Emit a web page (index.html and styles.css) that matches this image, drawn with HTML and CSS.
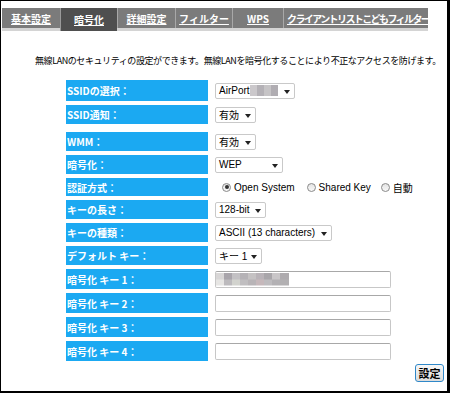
FILE: index.html
```html
<!DOCTYPE html>
<html lang="ja">
<head>
<meta charset="utf-8">
<title>暗号化</title>
<link rel="stylesheet" href="styles.css">
</head>
<body>
<div class="frame">
  <nav class="tabs">
    <a class="tab t1">基本設定</a>
    <a class="tab t2 active">暗号化</a>
    <a class="tab t3">詳細設定</a>
    <a class="tab t4">フィルター</a>
    <a class="tab t5">WPS</a>
    <a class="tab t6">クライアントリストこどもフィルター</a>
  </nav>
  <p class="desc">無線LANのセキュリティの設定ができます。無線LANを暗号化することにより不正なアクセスを防げます。</p>
  <div class="form">
    <div class="row r1"><div class="label">SSIDの選択：</div><div class="ctrl"><div class="select w-ssid"><span class="val">AirPort</span><span class="blur"></span><i class="arrow"></i></div></div></div>
    <div class="row"><div class="label">SSID通知：</div><div class="ctrl"><div class="select w-on"><span class="val">有効</span><i class="arrow"></i></div></div></div>
    <div class="row more"><div class="label">WMM：</div><div class="ctrl"><div class="select w-on"><span class="val">有効</span><i class="arrow"></i></div></div></div>
    <div class="row"><div class="label">暗号化：</div><div class="ctrl"><div class="select w-wep"><span class="val">WEP</span><i class="arrow"></i></div></div></div>
    <div class="row short"><div class="label">認証方式：</div><div class="ctrl radios">
      <label class="radio"><i class="dot checked"></i>Open System</label>
      <label class="radio"><i class="dot"></i>Shared Key</label>
      <label class="radio"><i class="dot"></i>自動</label>
    </div></div>
    <div class="row"><div class="label">キーの長さ：</div><div class="ctrl"><div class="select w-bit"><span class="val">128-bit</span><i class="arrow"></i></div></div></div>
    <div class="row"><div class="label">キーの種類：</div><div class="ctrl"><div class="select w-ascii"><span class="val">ASCII (13 characters)</span><i class="arrow"></i></div></div></div>
    <div class="row"><div class="label">デフォルト キー：</div><div class="ctrl"><div class="select w-key"><span class="val">キー 1</span><i class="arrow"></i></div></div></div>
    <div class="row key"><div class="label">暗号化 キー 1：</div><div class="ctrl"><div class="input"><span class="blur2"></span></div></div></div>
    <div class="row key"><div class="label">暗号化 キー 2：</div><div class="ctrl"><div class="input"></div></div></div>
    <div class="row key"><div class="label">暗号化 キー 3：</div><div class="ctrl"><div class="input"></div></div></div>
    <div class="row key"><div class="label">暗号化 キー 4：</div><div class="ctrl"><div class="input"></div></div></div>
  </div>
  <div class="actions"><button class="btn">設定</button></div>
</div>
</body>
</html>
```
FILE: styles.css
```css
* { box-sizing: border-box; }
html, body { margin: 0; padding: 0; background: #fff; }
.frame {
  width: 450px;
  height: 393px;
  border-style: solid;
  border-color: #000;
  border-width: 1px 3px 2px 1px;
  font-family: "Noto Sans CJK JP", "Liberation Sans", sans-serif;
}
.tabs {
  display: flex;
  margin: 7px 0 0 1px;
  width: 426px;
  height: 23px;
  background: #7b7b7b;
  border-bottom: 3px solid #d4d4d4;
}
.tab {
  display: flex;
  align-items: center;
  justify-content: center;
  height: 20px;
  color: #fff;
  font-size: 10px;
  font-weight: bold;
  text-decoration: underline;
  border-left: 1px solid #a8a8a8;
  white-space: nowrap;
}
.t1 { width: 58px; border-left: none; }
.t2 { width: 57px; }
.t3 { width: 58px; }
.t4 { width: 57px; }
.t5 { width: 51px; }
.t6 { width: 145px; letter-spacing: -1.6px; justify-content: flex-start; padding-left: 3px; }
.tab.active { background: #4f4f4f; height: 23px; margin-bottom: -3px; border-left-color: #9a9a9a; }
.desc {
  margin: 24px 0 0 34px;
  font-size: 9px;
  line-height: 12px;
  color: #000;
  white-space: nowrap;
  letter-spacing: -0.42px;
}
.form {
  display: flex;
  flex-direction: column;
  gap: 4px;
  margin: 13px 0 0 65px;
}
.row {
  display: grid;
  grid-template-columns: 142px auto;
  column-gap: 7px;
  height: 19px;
}
.row.r1 { height: 21px; }
.row.more { margin-top: 4px; }
.row.short { height: 18px; }
.row.key { height: 20px; }
.label {
  background: #1ba9f2;
  color: #fff;
  font-size: 10px;
  font-weight: bold;
  display: flex;
  align-items: center;
  padding-left: 1px;
  white-space: pre;
}
.ctrl {
  display: flex;
  align-items: center;
}
.select {
  position: relative;
  display: flex;
  align-items: center;
  height: 16px;
  border: 1px solid #c9c9c9;
  border-radius: 2px;
  background: #fff;
  padding-left: 3px;
  font-family: "Liberation Sans", "Noto Sans CJK JP", sans-serif;
  font-size: 10px;
  color: #000;
}
.w-ssid { width: 80px; }
.w-on { width: 41px; }
.w-wep { width: 68px; }
.w-bit { width: 51px; }
.w-ascii { width: 117px; }
.w-key { width: 47px; }
.arrow {
  position: absolute;
  right: 4px;
  top: 6px;
  width: 0;
  height: 0;
  border-left: 3.5px solid transparent;
  border-right: 3.5px solid transparent;
  border-top: 4px solid #222;
}
.blur {
  display: inline-block;
  width: 28px;
  height: 11px;
  background: linear-gradient(90deg, #cbc8cb 0 25%, #b4b1b6 25% 50%, #c6c4c6 50% 75%, #b0adb2 75%);
}
.radios { font-family: "Liberation Sans", "Noto Sans CJK JP", sans-serif; font-size: 10px; }
.radio {
  display: flex;
  align-items: center;
  margin-right: 10px;
}
.radios .radio:first-child { margin-left: 7px; margin-right: 12px; }
.dot {
  width: 9px;
  height: 9px;
  border-radius: 50%;
  border: 1px solid #8a8a8a;
  background: linear-gradient(#e4e4e4, #f8f8f8);
  margin-right: 3px;
  position: relative;
}
.dot.checked::after {
  content: "";
  position: absolute;
  left: 1.5px;
  top: 1.5px;
  width: 4px;
  height: 4px;
  border-radius: 50%;
  background: #333;
}
.input {
  width: 176px;
  height: 17px;
  border: 1px solid #c7c7c7;
  border-top-color: #a8a8a8;
  border-radius: 2px;
  background: #fff;
  display: flex;
  align-items: center;
}
.blur2 {
  display: block;
  width: 73px;
  height: 13px;
  background:
    linear-gradient(90deg, #d8d6d6 0 11%, #a9a5ab 11% 22%, #c3c1c4 22% 33%, #b5b2b6 33% 44%, #c5c2c3 44% 55%, #b9b3b8 55% 66%, #a9a6aa 66% 77%, #c9c6c8 77% 88%, #aeabae 88%) top / 100% 50% no-repeat,
    linear-gradient(90deg, #e6e5e3 0 11%, #bcbabd 11% 22%, #d2d3ce 22% 33%, #c0bec0 33% 44%, #b8b4b7 44% 55%, #c6b8bb 55% 66%, #bebcbf 66% 77%, #b3b1b4 77% 88%, #b2b0b2 88%) bottom / 100% 50% no-repeat;
}
.actions {
  display: flex;
  justify-content: flex-end;
  padding-right: 3px;
  margin-top: 3px;
}
.btn {
  width: 29px;
  height: 18px;
  padding: 0;
  border: 1px solid #2f88c9;
  border-radius: 3px;
  background: linear-gradient(#f7f7f7, #dcdcdc);
  font-family: "Noto Sans CJK JP", sans-serif;
  font-size: 11px;
  font-weight: bold;
  line-height: 14px;
  color: #000;
}
```
